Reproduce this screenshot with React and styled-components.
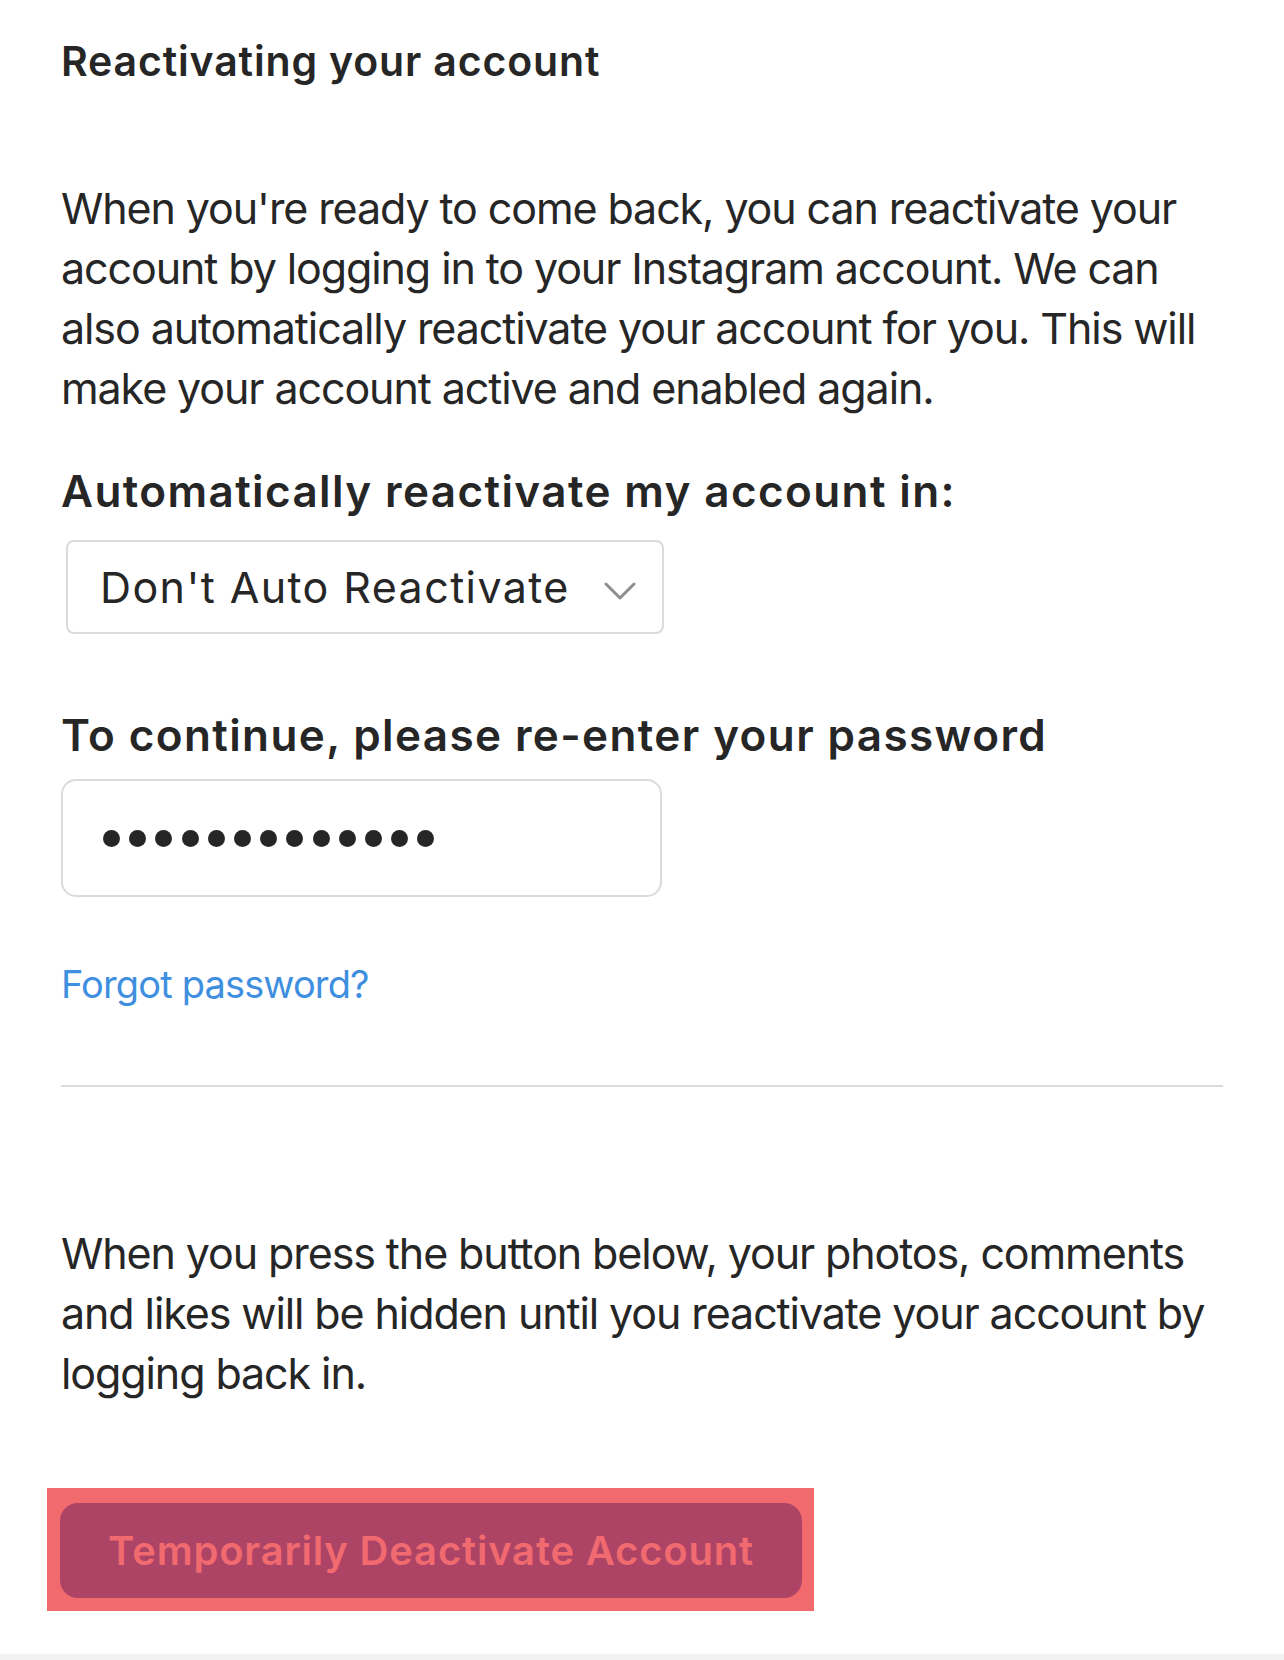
import React from 'react';
import styled, { createGlobalStyle } from 'styled-components';

const GlobalStyle = createGlobalStyle`
  html, body {
    margin: 0;
    padding: 0;
    background: #fff;
  }

  body {
    font-family: Inter, "Noto Sans", "Liberation Sans", sans-serif;
    color: #262626;
    -webkit-font-smoothing: antialiased;
  }
`;

const Page = styled.div`
  box-sizing: border-box;
  display: flex;
  flex-direction: column;
  align-items: flex-start;
  min-height: 1660px;
  padding: 37px 61px 0;
  width: 1284px;
  overflow: hidden;
`;

const Title = styled.h2`
  font-size: 41px;
  font-weight: 600;
  letter-spacing: 0.85px;
  line-height: 48px;
  margin: 0;
`;

const Paragraph = styled.p`
  font-size: 43px;
  font-weight: 400;
  letter-spacing: -1.1px;
  line-height: 60px;
  margin: ${({ top }) => top}px 0 0;
  width: 1170px;
`;

const Label = styled.label`
  display: block;
  font-size: 44px;
  font-weight: 600;
  letter-spacing: 1.4px;
  line-height: 56px;
  margin-top: ${({ top }) => top}px;
`;

const Select = styled.div`
  align-items: center;
  border: 2px solid #dbdbdb;
  border-radius: 8px;
  box-sizing: border-box;
  display: flex;
  font-size: 43px;
  gap: 34px;
  height: 94px;
  margin: 21px 0 0 5px;
  padding: 0 24px 0 32px;
  width: 598px;
`;

const SelectValue = styled.span`
  letter-spacing: 1.4px;
  line-height: 1;
`;

const Chevron = styled.svg`
  flex-shrink: 0;
  height: 20px;
  margin-top: 8px;
  width: 32px;
`;

const PasswordBox = styled.div`
  align-items: center;
  border: 2px solid #dbdbdb;
  border-radius: 15px;
  box-sizing: border-box;
  display: flex;
  gap: 9.2px;
  height: 118px;
  margin-top: 16px;
  padding-left: 40px;
  width: 601px;
`;

const Dot = styled.span`
  background: #262626;
  border-radius: 50%;
  display: block;
  height: 17px;
  width: 17px;
`;

const Link = styled.a`
  color: #3f8fe0;
  font-size: 38px;
  letter-spacing: -0.85px;
  line-height: 48px;
  margin-top: 63px;
  text-decoration: none;
`;

const Divider = styled.hr`
  border: 0;
  border-top: 2px solid #dbdbdb;
  margin: 77px 0 0;
  width: 1162px;
`;

const Highlight = styled.div`
  background: #f06a6e;
  box-sizing: border-box;
  height: 123px;
  margin: 85px 0 0 -14px;
  padding: 15px 12px 0 13px;
  width: 767px;
`;

const DangerButton = styled.button`
  background: #ad4466;
  border: 0;
  border-radius: 18px;
  color: #f06a70;
  cursor: pointer;
  font-family: inherit;
  font-size: 40px;
  font-weight: 600;
  height: 95px;
  letter-spacing: 0.8px;
  padding: 0;
  width: 742px;
`;

const FooterStrip = styled.div`
  align-self: stretch;
  background: #f2f2f2;
  height: 12px;
  margin: 43px -61px 0;
`;

const App = () => (
  <>
    <GlobalStyle />
    <Page>
      <Title>Reactivating your account</Title>
      <Paragraph top={93}>
        When you're ready to come back, you can reactivate your account by logging in to your
        Instagram account. We can also automatically reactivate your account for you. This will
        make your account active and enabled again.
      </Paragraph>

      <Label top={45}>Automatically reactivate my account in:</Label>
      <Select>
        <SelectValue>Don't Auto Reactivate</SelectValue>
        <Chevron viewBox="0 0 32 20" fill="none">
          <path d="M2 3l14 14L30 3" stroke="#8e8e8e" strokeWidth="3" strokeLinecap="round" strokeLinejoin="round" />
        </Chevron>
      </Select>

      <Label top={73}>To continue, please re-enter your password</Label>
      <PasswordBox>
        {Array.from({ length: 13 }).map((_, i) => (
          <Dot key={i} />
        ))}
      </PasswordBox>

      <Link href="#">Forgot password?</Link>

      <Divider />

      <Paragraph top={136}>
        When you press the button below, your photos, comments and likes will be hidden until you
        reactivate your account by logging back in.
      </Paragraph>

      <Highlight>
        <DangerButton>Temporarily Deactivate Account</DangerButton>
      </Highlight>

      <FooterStrip />
    </Page>
  </>
);

export default App;
